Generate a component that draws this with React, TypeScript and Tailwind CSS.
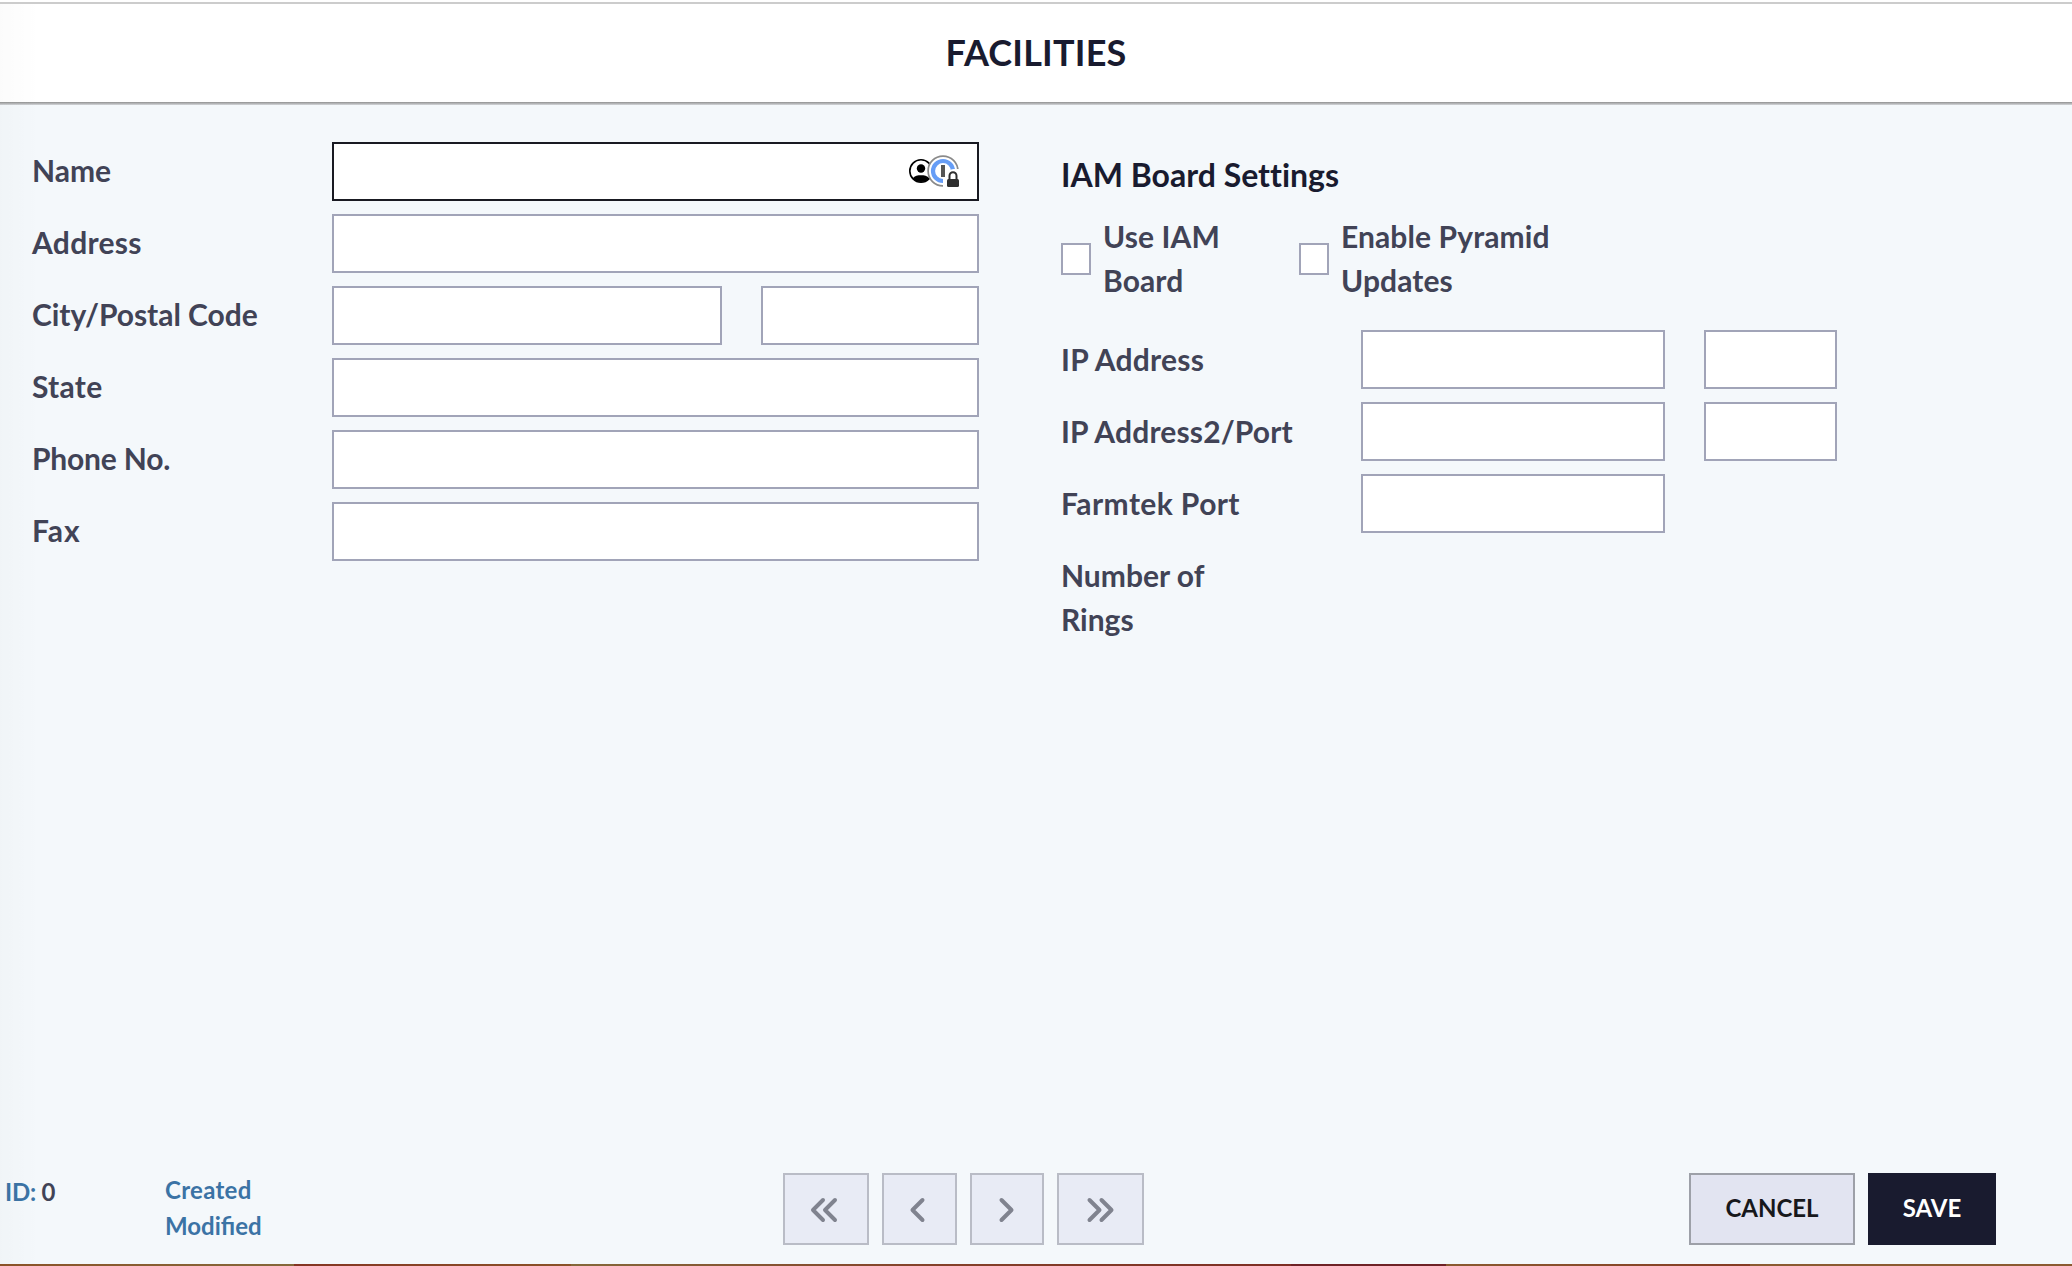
import React from "react";

const field = "block h-[59px] rounded-none border-2 bg-white px-4 outline-none";

function Field({ className = "", label }: { className?: string; label: string }) {
  return <input aria-label={label} className={`${field} border-[#a1a4b8] ${className}`} />;
}

function Row({
  label,
  pad = "pt-[7px]",
  tracking = "",
  children,
}: {
  label: string;
  pad?: string;
  tracking?: string;
  children?: React.ReactNode;
}) {
  return (
    <div className="flex min-h-[72px] items-start">
      <div className={`w-[300px] shrink-0 leading-[44px] ${pad}`}>
        <span className={`block w-[260px] ${tracking}`}>{label}</span>
      </div>
      <div className="flex gap-[39px]">{children}</div>
    </div>
  );
}

function AutofillIcons() {
  return (
    <svg className="absolute right-[18px] top-[10px] h-[36px] w-[54px]" viewBox="0 0 54 36" fill="none">
      <circle cx="14" cy="19" r="11.2" fill="#fff" stroke="#000" strokeWidth="1.6" />
      <circle cx="14" cy="16.5" r="4.2" fill="#000" />
      <path d="M5.5 26.4c2.4-2.6 5.2-3.1 8.5-3.1s6.1.5 8.5 3.1a12 12 0 0 1-17 0Z" fill="#000" />
      <circle cx="36" cy="19" r="14.9" fill="#fff" stroke="#8a8a8a" strokeWidth="1.7" />
      <circle cx="36" cy="19" r="10" stroke="#669df6" strokeWidth="4.2" />
      <path d="M36 36V25h2c0-4 4-8 9-8h7v19H36Z" fill="#fff" />
      <rect x="34" y="13" width="4" height="12" fill="#555" />
      <path d="M42.5 28v-4.200a3.500 3.500 0 0 1 7 0V28" stroke="#2e2e2e" strokeWidth="2" />
      <rect x="40" y="27" width="12" height="8" rx="1.5" fill="#2e2e2e" />
    </svg>
  );
}

function Check({ className, lines }: { className: string; lines: string[] }) {
  return (
    <label className={`flex items-start ${className}`}>
      <span className="mr-[12px] mt-[29px] h-[32px] w-[30px] shrink-0 border-2 border-[#a1a4b8] bg-white" />
      <span className="leading-[44px]">
        {lines.map((l) => (
          <span key={l} className="block whitespace-nowrap tracking-[0.1px]">{l}</span>
        ))}
      </span>
    </label>
  );
}

function NavButton({ className, d, label }: { className: string; d: string; label: string }) {
  return (
    <button aria-label={label} className={`flex h-[72px] items-center justify-center border-2 border-[#b9bcc6] bg-[#e8ebf5] ${className}`}>
      <svg className="h-[28px] w-[30px] shrink-0 overflow-visible" viewBox="0 0 30 28" fill="none" stroke="#80838f" strokeWidth="4" strokeLinecap="round" strokeLinejoin="round">
        <path d={d} />
      </svg>
    </button>
  );
}

export default function App() {
  return (
    <div className="relative flex h-[1266px] w-[2072px] flex-col overflow-hidden bg-[#f4f8fb] font-['Lato',sans-serif] text-[30px] font-bold text-[#414356]">
      <header className="flex h-[102px] shrink-0 flex-col bg-white">
        <div className="mt-[2px] h-[2px] bg-[#cccccc]" />
        <h1 className="flex flex-1 items-center justify-center pb-[2px] text-[36px] leading-none tracking-[0.2px] text-[#191b2f]">FACILITIES</h1>
      </header>
      <div className="h-[3px] shrink-0 bg-linear-to-b from-[#919191] to-[#d4d7da]" />

      <main className="flex flex-1 pl-[32px] pt-[37px]">
        <section className="w-[1029px] shrink-0">
          <Row label="Name" pad="pt-[6px]">
            <div className="relative">
              <input aria-label="Name" className={`${field} w-[647px] border-[#191a22]`} />
              <AutofillIcons />
            </div>
          </Row>
          <Row label="Address" pad="pt-[6px]" tracking="tracking-[0.3px]"><Field label="Address" className="w-[647px]" /></Row>
          <Row label="City/Postal Code" pad="pt-[6px]" tracking="tracking-[-0.05px]">
            <Field label="City" className="w-[390px]" />
            <Field label="Postal Code" className="w-[218px]" />
          </Row>
          <Row label="State" pad="pt-[6px]" tracking="tracking-[0.3px]"><Field label="State" className="w-[647px]" /></Row>
          <Row label="Phone No." pad="pt-[6px]" tracking="tracking-[-0.2px]"><Field label="Phone No." className="w-[647px]" /></Row>
          <Row label="Fax" pad="pt-[6px]" tracking="tracking-[0.9px]"><Field label="Fax" className="w-[647px]" /></Row>
        </section>

        <section>
          <h2 className="pt-[11px] text-[32px] leading-[44px] text-[#191b2f] [font-variant-ligatures:none]">IAM Board Settings</h2>
          <div className="mt-[17px] mb-[28px] flex h-[88px]">
            <Check className="w-[238px]" lines={["Use IAM", "Board"]} />
            <Check className="w-[300px]" lines={["Enable Pyramid", "Updates"]} />
          </div>
          <Row label="IP Address" tracking="tracking-[0.25px]">
            <Field label="IP Address" className="w-[304px]" />
            <Field label="Port" className="w-[133px]" />
          </Row>
          <Row label="IP Address2/Port" tracking="tracking-[0.15px]">
            <Field label="IP Address 2" className="w-[304px]" />
            <Field label="Port 2" className="w-[133px]" />
          </Row>
          <Row label="Farmtek Port" tracking="tracking-[0.4px]"><Field label="Farmtek Port" className="w-[304px]" /></Row>
          <div className="w-[180px] pt-[7px] leading-[44px]">Number of Rings</div>
        </section>
      </main>

      <footer className="flex h-[91px] shrink-0 text-[24px] leading-[36px] text-[#3b73a5]">
        <div className="w-[159px] pl-[5px] pt-px tracking-[-0.2px]">ID: <span className="text-[#414356]">0</span></div>
        <div className="-mt-px w-[624px] pl-[6px]">
          <p className="tracking-[0.3px]">Created</p>
          <p>Modified</p>
        </div>
        <nav className="flex gap-[13px]">
          <NavButton label="First" className="w-[86px]" d="M12 5 2 15 12 25M24 5 14 15 24 25" />
          <NavButton label="Previous" className="w-[75px]" d="M17.5 5 7.5 15 17.5 25" />
          <NavButton label="Next" className="w-[74px]" d="M9.5 5 19.5 15 9.5 25" />
          <NavButton label="Last" className="w-[87px]" d="M3.5 5 13.5 15 3.5 25M15.5 5 25.5 15 15.5 25" />
        </nav>
        <div className="ml-[545px] flex gap-[13px]">
          <button className="h-[72px] w-[166px] border-2 border-[#9da0a8] bg-[#e2e4f1] pb-[2px] text-[#17181c]">CANCEL</button>
          <button className="h-[72px] w-[128px] bg-[#191b2f] pb-[2px] text-white">SAVE</button>
        </div>
      </footer>
      <div className="flex h-[2px] shrink-0">
        <div className="w-[294px] bg-linear-to-r from-[#8a5228] to-[#84683a]" />
        <div className="w-[277px] bg-linear-to-r from-[#843423] to-[#8a5228]" />
        <div className="w-[720px] bg-linear-to-r from-[#84683a] via-[#84412a] to-[#7d2e24]" />
        <div className="w-[155px] bg-[#6e2226]" />
        <div className="w-[304px] bg-linear-to-r from-[#8a5a30] to-[#843a23]" />
        <div className="flex-1 bg-[#8a5a30]" />
      </div>
      <div className="pointer-events-none absolute left-0 top-[4px] h-[1260px] w-[40px] bg-linear-to-r from-black/[0.015] to-transparent" />
    </div>
  );
}
